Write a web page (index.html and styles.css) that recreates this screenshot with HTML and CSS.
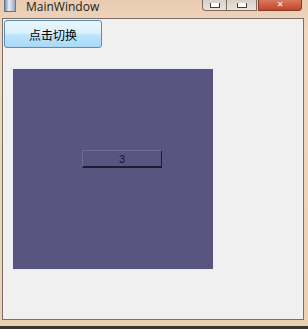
FILE: index.html
```html
<!DOCTYPE html>
<html lang="zh">
<head>
  <meta charset="UTF-8">
  <title>MainWindow</title>
  <link rel="stylesheet" href="styles.css">
</head>
<body>
  <div class="window">
    <div class="titlebar">
      <div class="appIcon"></div>
      <span class="title">MainWindow</span>
      <div class="controls">
        <div class="ctl minBtn"><span class="glyph"></span></div>
        <div class="ctl maxBtn"><span class="glyph"></span></div>
        <div class="ctl closeBtn"><span class="x">✕</span></div>
      </div>
    </div>
    <div class="client">
      <button class="switchBtn">点击切换</button>
      <div class="stage">
        <div class="panel">
          <div class="counter">3</div>
        </div>
      </div>
    </div>
  </div>
</body>
</html>
```

FILE: styles.css
```css
html, body {
  margin: 0;
  padding: 0;
  width: 308px;
  height: 329px;
  overflow: hidden;
  background-color: #3a3632;
}

.window {
  width: 308px;
  height: 326px;
  box-sizing: border-box;
  background: linear-gradient(#e8cbb0, #f0d7bf 30px, #ecd0b4);
  padding: 0 4px 6px 2px;
  display: flex;
  flex-direction: column;
  font-family: "Noto Sans CJK SC", "DejaVu Sans", sans-serif;
}

.titlebar {
  height: 18px;
  display: flex;
  align-items: flex-start;
  position: relative;
}

.appIcon {
  width: 10px;
  height: 11px;
  margin: 0 0 0 2px;
  background: linear-gradient(90deg, #7a8ea8, #e8eef6 40%, #9aaac0);
  border: 1px solid #6c7686;
  border-top: none;
}

.title {
  margin: 0 0 0 10px;
  font-family: "Open Sans", "Liberation Sans", sans-serif;
  font-size: 12px;
  line-height: 13px;
  color: #1c1c1c;
}

.controls {
  position: absolute;
  top: 0;
  left: 200px;
  display: flex;
}

.ctl {
  height: 10px;
  border: 1px solid #7d6a5a;
  border-top: none;
  display: flex;
  justify-content: center;
  align-items: flex-end;
}

.minBtn {
  width: 23px;
  border-radius: 0 0 0 4px;
  background: linear-gradient(#d8d0c8, #ece4dc);
}

.maxBtn {
  width: 29px;
  border-left: none;
  background: linear-gradient(#d8d0c8, #ece4dc);
}

.glyph {
  width: 8px;
  height: 4px;
  margin-bottom: 2px;
  border: 1px solid #404040;
  border-top: none;
  background: #fff;
}

.closeBtn {
  width: 42px;
  margin-left: 1px;
  border-radius: 0 0 4px 0;
  border-color: #8a3a2a;
  background: linear-gradient(#d77a5e, #c4442a);
}

.x {
  color: #fff;
  font-family: "DejaVu Sans", sans-serif;
  font-size: 8px;
  line-height: 10px;
  font-weight: bold;
}

.client {
  flex: 1;
  background-color: #f0f0f0;
  border: 1px solid #7b7068;
  display: flex;
  flex-direction: column;
  align-items: flex-start;
}

.switchBtn {
  margin: 1px 0 0 1px;
  width: 98px;
  height: 28px;
  border: 1px solid #5e8cb0;
  border-radius: 3px;
  background: linear-gradient(#eaf6fd, #d9f0fc 50%, #bee6fd 51%, #a7d9f5);
  font-family: "Noto Sans CJK SC", sans-serif;
  font-size: 12px;
  color: #000;
  padding: 0;
}

.stage {
  margin: 20px 0 0 9px;
  padding: 1px;
  background-color: #e8ecf8;
}

.panel {
  width: 200px;
  height: 200px;
  box-sizing: border-box;
  padding: 81px 0 0 69px;
  background-color: #5a5580;
}

.counter {
  width: 80px;
  height: 18px;
  box-sizing: border-box;
  border: 1px solid #6e6a92;
  border-right-color: #1e1c34;
  border-bottom: 2px solid #1e1c34;
  font-family: "Liberation Sans", sans-serif;
  font-size: 11px;
  line-height: 16px;
  text-align: center;
  color: #14122a;
}
```
